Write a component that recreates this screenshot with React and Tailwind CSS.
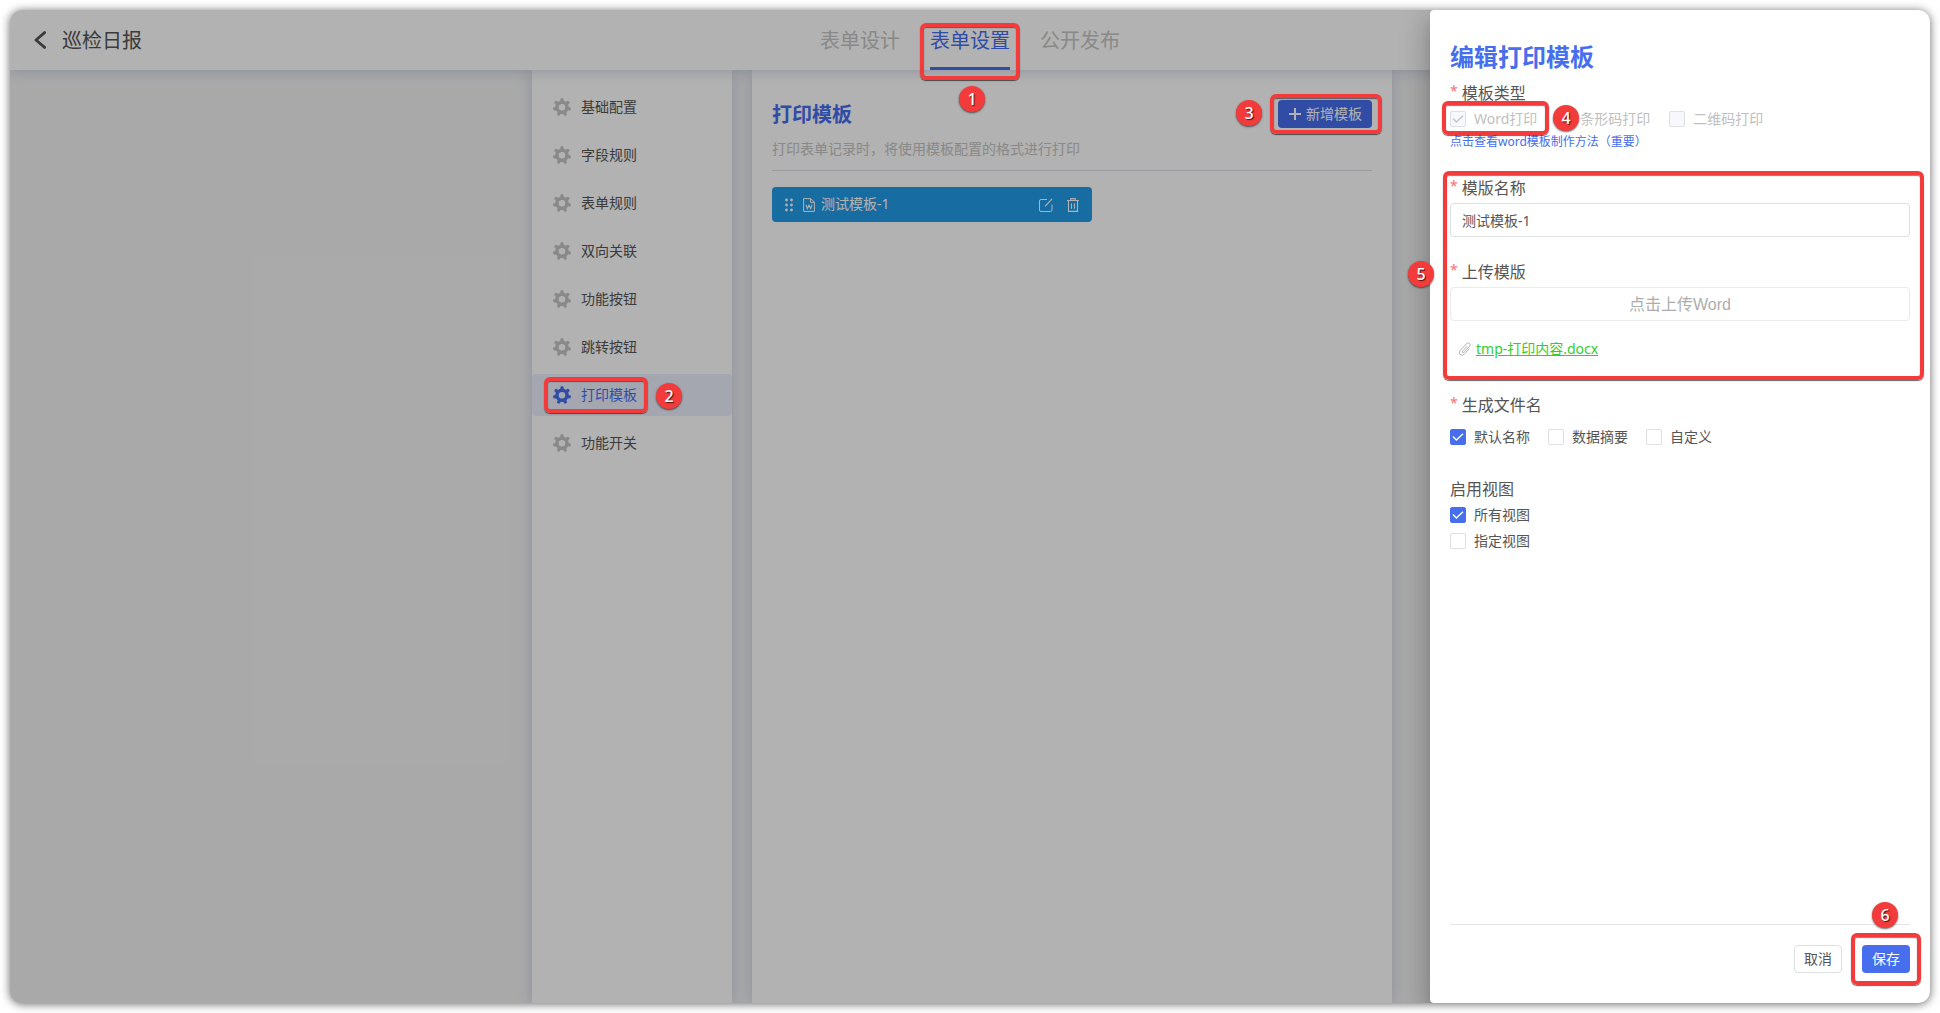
import { useState } from 'react';
import clsx from 'clsx';

const TABS = ['表单设计', '表单设置', '公开发布'];

const MENU = [
  '基础配置',
  '字段规则',
  '表单规则',
  '双向关联',
  '功能按钮',
  '跳转按钮',
  '打印模板',
  '功能开关',
];

// Red frame drawn over a part of the page
function Frame({ className }) {
  return (
    <span
      className={clsx(
        'pointer-events-none absolute z-30 rounded-md border-4 border-[#f43b3b] shadow-[0_1px_1px_rgba(0,0,0,0.6),inset_0_1px_1px_rgba(0,0,0,0.5)]',
        className
      )}
    />
  );
}

// Numbered step marker
function Step({ number, className }) {
  return (
    <span
      className={clsx(
        'pointer-events-none absolute z-30 flex size-[26px] items-center justify-center rounded-full bg-[#f43b3b] text-base leading-none font-medium text-white shadow-[0_1px_2px_rgba(0,0,0,0.6)] [text-shadow:1px_1px_1px_rgba(0,0,0,0.7)]',
        className
      )}
    >
      {number}
    </span>
  );
}

function GearIcon({ className }) {
  return (
    <svg viewBox="0 0 18 18" className={clsx('size-[18px]', className)} aria-hidden="true">
      <circle cx="9" cy="9.2" r="5" fill="none" stroke="currentColor" strokeWidth="3.4" />
      {[0, 1, 2, 3, 4, 5, 6].map((i) => (
        <path
          key={i}
          d="M7.2 3.4 7.5 0.9Q7.6 0.2 8.2 0.2H9.8Q10.4 0.2 10.5 0.9L10.8 3.4Z"
          fill="currentColor"
          transform={`rotate(${(i * 360) / 7} 9 9.2)`}
        />
      ))}
    </svg>
  );
}

function DragIcon() {
  return (
    <svg viewBox="0 0 8 14" className="h-[14px] w-2" fill="currentColor" aria-hidden="true">
      {[2, 7, 12].map((y) => (
        <g key={y}>
          <circle cx="1.5" cy={y} r="1.4" />
          <circle cx="6.5" cy={y} r="1.4" />
        </g>
      ))}
    </svg>
  );
}

function WordIcon() {
  return (
    <svg viewBox="0 0 12 14" className="h-[14px] w-3" fill="none" stroke="currentColor" aria-hidden="true">
      <path d="M0.6 0.6H7.8L11.4 4.2V13.4H0.6ZM7.6 0.8V4.4H11.2" />
      <path d="M3 6.6 4.3 10.6 6 7.2 7.7 10.6 9 6.6" strokeWidth="1.1" />
    </svg>
  );
}

function EditIcon() {
  return (
    <svg viewBox="0 0 14 14" className="size-[14px]" fill="none" stroke="currentColor" aria-hidden="true">
      <path d="M8 1.5H2Q0.5 1.5 0.5 3V12Q0.5 13.5 2 13.5H11.5Q13 13.5 13 12V6.5" />
      <path d="M6 8.3 13 0.9" strokeWidth="1.2" />
    </svg>
  );
}

function TrashIcon() {
  return (
    <svg viewBox="0 0 12 14" className="h-[14px] w-3" fill="none" stroke="currentColor" aria-hidden="true">
      <path d="M0 2.5H12M3.8 2.3V0.6H8.2V2.3M1.5 2.8V13.4H10.5V2.8M4.5 5.4V10.8M7.5 5.4V10.8" strokeWidth="1.1" />
    </svg>
  );
}

function ClipIcon() {
  return (
    <svg viewBox="0 0 14 14" className="size-[14px] text-[#b4b4b4]" fill="none" stroke="currentColor" strokeLinecap="round" aria-hidden="true">
      <path d="M9.2 4.2 4.6 9.1Q4 10 4.6 10.5 5.3 11 6 10.3L11.6 4.3Q13 2.6 11.6 1.3 10.1 0.2 8.6 1.6L2.3 8.4Q0.4 10.8 2.1 12.6 4.1 14.2 6.2 12.2L11.2 6.9" />
    </svg>
  );
}

function Checkbox({ label, defaultChecked, disabled }) {
  return (
    <label className={clsx('flex h-5 items-center gap-2 text-sm leading-5', disabled ? 'text-[#c0c0c0]' : 'text-[#555]')}>
      <span className="grid size-4">
        <input
          type="checkbox"
          defaultChecked={defaultChecked}
          disabled={disabled}
          className="peer size-4 appearance-none rounded-xs border border-[#dcdfe6] bg-white [grid-area:1/1] checked:border-[#466eed] checked:bg-[#466eed] disabled:border-[#dcdfe6] disabled:bg-[#f8f8fc]"
        />
        <svg
          viewBox="0 0 16 16"
          className="pointer-events-none invisible size-4 text-white [grid-area:1/1] peer-checked:visible peer-disabled:text-[#c0c4cc]"
          fill="none"
          stroke="currentColor"
          strokeWidth="1.4"
          aria-hidden="true"
        >
          <path d="M3 7.6 6.4 11 13 4.8" />
        </svg>
      </span>
      {label}
    </label>
  );
}

function FieldLabel({ children, required = true, ...props }) {
  const Tag = props.htmlFor ? 'label' : 'div';
  return (
    <Tag className="flex h-6 gap-1 text-base leading-6 text-[#555]" {...props}>
      {required && <span className="text-sm leading-5 text-[#f87171]">*</span>}
      {children}
    </Tag>
  );
}

function Header({ active, onChange }) {
  return (
    <header className="relative grid h-[60px] shrink-0 grid-cols-[1fr_auto_1fr] bg-white shadow-[0_2px_12px_rgba(80,95,150,0.25)]">
      <div className="flex items-center gap-4 pl-6">
        <button type="button" aria-label="返回" className="text-[#555]">
          <svg viewBox="0 0 12 18" className="h-[18px] w-3" fill="none" stroke="currentColor" strokeWidth="2.8" strokeLinecap="round" strokeLinejoin="round">
            <path d="M10.6 1.6 2 9 10.6 16.4" />
          </svg>
        </button>
        <h1 className="pt-0.5 text-xl leading-7 text-[#555]">巡检日报</h1>
      </div>
      <nav className="flex gap-[30px]">
        {TABS.map((tab) => (
          <button
            key={tab}
            type="button"
            onClick={() => onChange(tab)}
            className={clsx(
              'relative flex items-center border-b-3 pt-[5px] text-xl',
              tab === active ? 'border-[#466eed] text-[#466eed]' : 'border-transparent text-[#c4c4c4]'
            )}
          >
            {tab}
            {tab === active && (
              <>
                <Frame className="-inset-x-[10px] top-[13px] -bottom-[13px]" />
                <Step number={1} className="top-[76px] left-[29px]" />
              </>
            )}
          </button>
        ))}
      </nav>
    </header>
  );
}

function SideMenu({ active, onChange }) {
  return (
    <nav className="flex w-[200px] flex-col gap-1.5 bg-white pt-4 shadow-[0_0_14px_rgba(80,95,150,0.25)]">
      {MENU.map((item) => (
        <button
          key={item}
          type="button"
          onClick={() => onChange(item)}
          className={clsx(
            'relative flex h-[42px] items-center gap-2.5 rounded-sm pl-[21px] text-sm',
            item === active ? 'bg-[#ecf0fd] text-[#466eed]' : 'text-[#555]'
          )}
        >
          <GearIcon className={item !== active && 'text-[#c4c4c4]'} />
          {item}
          {item === active && (
            <>
              <Frame className="inset-y-[3px] left-3 w-[104px]" />
              <Step number={2} className="top-[9px] left-[124px]" />
            </>
          )}
        </button>
      ))}
    </nav>
  );
}

function TemplatePanel() {
  return (
    <main className="w-[640px] bg-white px-5 pt-[30px] shadow-[0_0_14px_rgba(80,95,150,0.25)]">
      <div className="flex h-7 items-center justify-between">
        <h2 className="pt-0.5 text-xl font-bold text-[#466eed]">打印模板</h2>
        <button type="button" className="relative flex h-7 items-center gap-1 rounded-sm bg-[#466eed] px-2.5 text-sm text-white">
          <svg viewBox="0 0 14 14" className="size-[14px]" stroke="currentColor" strokeWidth="2" aria-hidden="true">
            <path d="M7 1V13M1 7H13" />
          </svg>
          新增模板
          <Frame className="-top-[6px] -right-[10px] -bottom-[6px] -left-2" />
          <Step number={3} className="top-0 right-[110px]" />
        </button>
      </div>
      <p className="border-b border-[#dcdfe6] py-[11px] text-sm leading-5 text-[#c4c4c4]">
        打印表单记录时，将使用模板配置的格式进行打印
      </p>
      <div className="mt-4 flex h-[35px] w-[320px] items-center rounded-sm bg-[#219ce7] px-[13px] text-sm text-white">
        <DragIcon />
        <span className="ml-2.5">
          <WordIcon />
        </span>
        <span className="ml-1.5 grow pb-0.5">测试模板-1</span>
        <button type="button" aria-label="编辑">
          <EditIcon />
        </button>
        <button type="button" aria-label="删除" className="ml-[14px]">
          <TrashIcon />
        </button>
      </div>
    </main>
  );
}

function EditDrawer() {
  const [name, setName] = useState('测试模板-1');

  return (
    <aside className="absolute inset-y-0 right-0 z-20 flex w-[500px] flex-col rounded-l-sm bg-white px-5 pt-[31px] pb-[30px] shadow-[0_8px_10px_-5px_rgba(0,0,0,0.2),0_16px_24px_2px_rgba(0,0,0,0.14),0_6px_30px_5px_rgba(0,0,0,0.12)]">
      <h2 className="text-2xl leading-8 font-bold text-[#466eed]">编辑打印模板</h2>

      <div className="mt-2">
        <FieldLabel>模板类型</FieldLabel>
        <div className="relative mt-1 flex gap-[19px]">
          <Checkbox label="Word打印" defaultChecked disabled />
          <Checkbox label="条形码打印" disabled />
          <Checkbox label="二维码打印" disabled />
          <Frame className="-top-2 -left-2 h-[34px] w-[107px]" />
          <Step number={4} className="-top-1 left-[103px]" />
        </div>
        <a href="#guide" className="mt-[5px] block text-xs leading-4 text-[#466eed]">
          点击查看word模板制作方法（重要）
        </a>
      </div>

      <div className="relative mt-[26px]">
        <Frame className="-top-[5px] -right-[14px] -bottom-[21px] -left-[7px]" />
        <Step number={5} className="top-[85px] -left-[42px]" />
        <FieldLabel htmlFor="template-name">模版名称</FieldLabel>
        <input
          id="template-name"
          value={name}
          onChange={(e) => setName(e.target.value)}
          className="mt-[3px] block h-[34px] w-full rounded-sm border border-[#dcdfe6] px-[11px] text-sm text-[#555]"
        />
        <div className="mt-[23px]">
          <FieldLabel>上传模版</FieldLabel>
          <button
            type="button"
            className="mt-[3px] block h-[34px] w-full rounded-sm border border-[#ebebeb] pt-0.5 font-['Liberation_Sans','Noto_Sans_CJK_SC',sans-serif] text-base text-[#adadad]"
          >
            点击上传Word
          </button>
        </div>
        <div className="mt-[18px] flex h-5 items-center gap-1 pl-2">
          <ClipIcon />
          <a href="#file" className="text-sm leading-5 text-[#32cd32] underline">
            tmp-打印内容.docx
          </a>
        </div>
      </div>

      <div className="mt-[34px]">
        <FieldLabel>生成文件名</FieldLabel>
        <div className="mt-2.5 flex gap-[18px]">
          <Checkbox label="默认名称" defaultChecked />
          <Checkbox label="数据摘要" />
          <Checkbox label="自定义" />
        </div>
      </div>

      <div className="mt-[30px]">
        <FieldLabel required={false}>启用视图</FieldLabel>
        <div className="mt-1 flex flex-col items-start gap-1.5">
          <Checkbox label="所有视图" defaultChecked />
          <Checkbox label="指定视图" />
        </div>
      </div>

      <footer className="mt-auto flex justify-end gap-5 border-t border-[#e4e4e8] pt-5">
        <button type="button" className="h-7 w-12 rounded-sm border border-[#dcdfe6] text-sm text-[#555]">
          取消
        </button>
        <button type="button" className="relative h-7 w-12 rounded-sm bg-[#466eed] text-sm text-white">
          保存
          <Frame className="-inset-x-[11px] -inset-y-3" />
          <Step number={6} className="-top-[43px] left-2.5" />
        </button>
      </footer>
    </aside>
  );
}

export default function App() {
  const [tab, setTab] = useState('表单设置');
  const [menu, setMenu] = useState('打印模板');

  return (
    <div className="flex min-h-screen bg-white p-2.5 font-['Noto_Sans','Noto_Sans_CJK_SC',sans-serif]">
      <div className="relative flex grow flex-col overflow-hidden rounded-xl bg-[#f3f3f4] shadow-[0_1px_10px_rgba(0,0,0,0.6)]">
        <Header active={tab} onChange={setTab} />
        <div className="flex grow justify-center gap-5 pr-4">
          <SideMenu active={menu} onChange={setMenu} />
          <TemplatePanel />
        </div>
        {/* Dimmed backdrop under the drawer */}
        <div className="absolute inset-0 z-10 bg-black/30" />
        <EditDrawer />
      </div>
    </div>
  );
}
